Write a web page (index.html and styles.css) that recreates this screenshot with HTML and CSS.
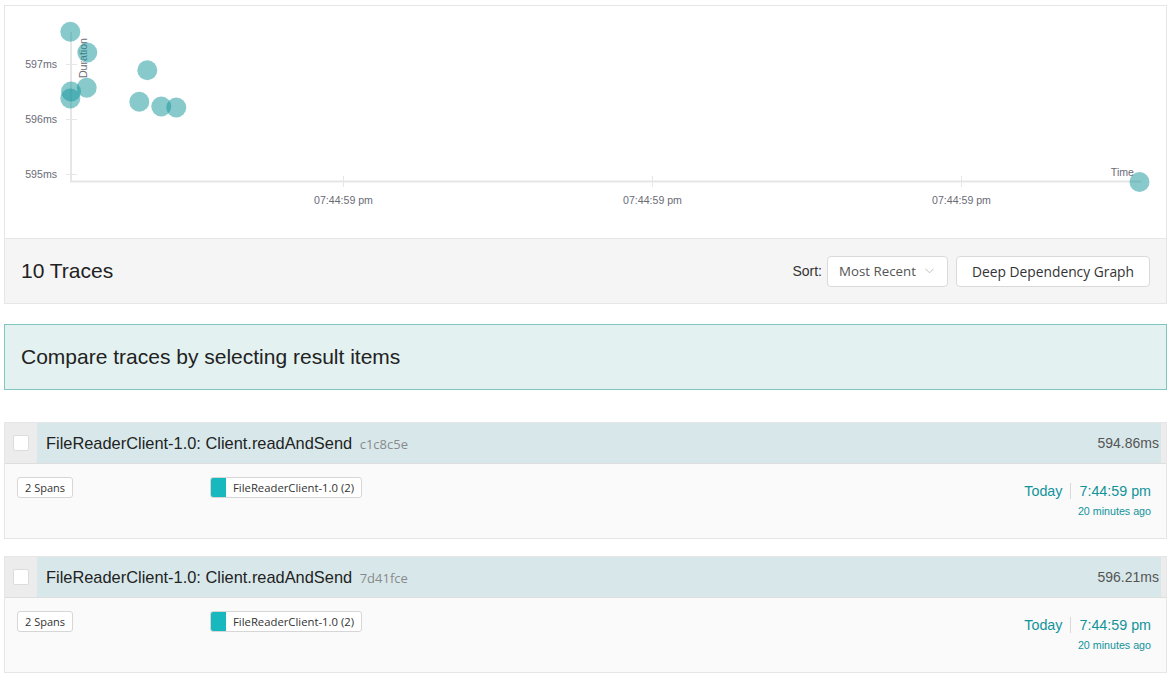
FILE: index.html
```html
<!DOCTYPE html>
<html>
<head>
<meta charset="utf-8">
<link rel="stylesheet" href="styles.css">
</head>
<body>
<div class="page">
  <div class="chart">
    <svg class="chart-svg" width="1161" height="232" viewBox="5 6 1161 232">
      <g class="axis">
        <line x1="71" y1="32" x2="71" y2="182" stroke="#e6e6e6" stroke-width="2"/>
        <line x1="70" y1="181.5" x2="1141" y2="181.5" stroke="#e6e6e6" stroke-width="2"/>
        <line x1="66" y1="64.5" x2="77" y2="64.5" stroke="#e6e6e6" stroke-width="1"/>
        <line x1="66" y1="119.5" x2="77" y2="119.5" stroke="#e6e6e6" stroke-width="1"/>
        <line x1="66" y1="174.5" x2="77" y2="174.5" stroke="#e6e6e6" stroke-width="1"/>
        <line x1="343.5" y1="176" x2="343.5" y2="187" stroke="#e6e6e6" stroke-width="1"/>
        <line x1="652.5" y1="176" x2="652.5" y2="187" stroke="#e6e6e6" stroke-width="1"/>
        <line x1="961.5" y1="176" x2="961.5" y2="187" stroke="#e6e6e6" stroke-width="1"/>
      </g>
      <g class="tick-labels">
        <text x="57" y="68" text-anchor="end">597ms</text>
        <text x="57" y="123" text-anchor="end">596ms</text>
        <text x="57" y="178" text-anchor="end">595ms</text>
        <text x="343.5" y="204" text-anchor="middle">07:44:59 pm</text>
        <text x="652.5" y="204" text-anchor="middle">07:44:59 pm</text>
        <text x="961.5" y="204" text-anchor="middle">07:44:59 pm</text>
        <text x="1134" y="176" text-anchor="end">Time</text>
        <text transform="translate(87,38) rotate(-90)" text-anchor="end">Duration</text>
      </g>
      <g class="dots">
        <circle cx="70.3" cy="31.7" r="10"/>
        <circle cx="87.3" cy="52.5" r="10"/>
        <circle cx="147.3" cy="70.3" r="10"/>
        <circle cx="71" cy="91.5" r="10"/>
        <circle cx="70.3" cy="98.5" r="10"/>
        <circle cx="86.7" cy="87.7" r="10"/>
        <circle cx="139.3" cy="101.7" r="10"/>
        <circle cx="161.3" cy="106.5" r="10"/>
        <circle cx="176.3" cy="107.5" r="10"/>
        <circle cx="1139.5" cy="182" r="10"/>
      </g>
    </svg>
  </div>

  <div class="results-header">
    <div class="results-count">10 Traces</div>
    <div class="results-actions">
      <span class="sort-label">Sort:</span>
      <div class="select">
        <span>Most Recent</span>
        <svg class="chevron" width="9" height="6" viewBox="0 0 9 6"><path d="M0.5 0.8 L4.5 4.8 L8.5 0.8" fill="none" stroke="#bfbfbf" stroke-width="1"/></svg>
      </div>
      <div class="btn">Deep Dependency Graph</div>
    </div>
  </div>

  <div class="alert">Compare traces by selecting result items</div>

  <div class="trace">
    <div class="trace-head">
      <div class="check-col"><span class="checkbox"></span></div>
      <div class="title-bar">
        <div class="title">FileReaderClient-1.0: Client.readAndSend <span class="trace-id">c1c8c5e</span></div>
        <div class="duration">594.86ms</div>
      </div>
    </div>
    <div class="trace-body">
      <div class="col-spans"><span class="tag">2 Spans</span></div>
      <div class="col-services"><span class="svc-tag"><span class="svc-color"></span><span class="svc-name">FileReaderClient-1.0 (2)</span></span></div>
      <div class="col-time">
        <div class="time-line"><span class="today">Today</span><span class="clock">7:44:59 pm</span></div>
        <div class="ago">20 minutes ago</div>
      </div>
    </div>
  </div>

  <div class="trace second">
    <div class="trace-head">
      <div class="check-col"><span class="checkbox"></span></div>
      <div class="title-bar">
        <div class="title">FileReaderClient-1.0: Client.readAndSend <span class="trace-id">7d41fce</span></div>
        <div class="duration">596.21ms</div>
      </div>
    </div>
    <div class="trace-body">
      <div class="col-spans"><span class="tag">2 Spans</span></div>
      <div class="col-services"><span class="svc-tag"><span class="svc-color"></span><span class="svc-name">FileReaderClient-1.0 (2)</span></span></div>
      <div class="col-time">
        <div class="time-line"><span class="today">Today</span><span class="clock">7:44:59 pm</span></div>
        <div class="ago">20 minutes ago</div>
      </div>
    </div>
  </div>
</div>
</body>
</html>
```

FILE: styles.css
```css
* { box-sizing: border-box; }

body {
  margin: 0;
  background: #ffffff;
  font-family: "Liberation Sans", Arial, sans-serif;
  color: #222;
}

.page {
  width: 1163px;
  margin: 5px 0 0 4px;
}

.chart {
  border: 1px solid #e6e6e6;
  height: 234px;
  background: #fff;
}

.chart-svg { display: block; }

.tick-labels text {
  font-family: "Liberation Sans", Arial, sans-serif;
  font-size: 10.6px;
  fill: #6b6b76;
}

.dots circle {
  fill: #12939a;
  fill-opacity: 0.5;
}

.results-header {
  display: flex;
  align-items: center;
  justify-content: space-between;
  height: 65px;
  padding: 0 16px;
  background: #f5f5f5;
  border: 1px solid #e6e6e6;
  border-top: none;
}

.results-count {
  font-size: 21px;
  color: #222;
}

.results-actions {
  display: flex;
  align-items: center;
}

.sort-label {
  font-size: 14px;
  color: #333;
  margin-right: 5px;
}

.select {
  display: flex;
  align-items: center;
  justify-content: space-between;
  width: 121px;
  height: 31px;
  padding: 0 13px 0 11px;
  background: #fff;
  border: 1px solid #d9d9d9;
  border-radius: 4px;
  font-family: "Open Sans", "Noto Sans", sans-serif;
  font-size: 13.3px;
  color: #555;
}

.chevron { display: block; }

.btn {
  display: flex;
  align-items: center;
  justify-content: center;
  margin-left: 8px;
  width: 194px;
  height: 31px;
  background: #fff;
  border: 1px solid #d9d9d9;
  border-radius: 4px;
  font-family: "Open Sans", "Noto Sans", sans-serif;
  font-size: 13.8px;
  color: #333;
}

.alert {
  display: flex;
  align-items: center;
  margin-top: 20px;
  height: 66px;
  padding-left: 16px;
  background: #e3f1f0;
  border: 1px solid #7fc6bf;
  font-size: 21px;
  color: #222;
}

.trace {
  margin-top: 32px;
  border: 1px solid #e6e6e6;
}

.trace.second { margin-top: 17px; }

.trace-head {
  display: flex;
  height: 41px;
  background: #ececec;
  padding-right: 5px;
  border-bottom: 1px solid #dedede;
}

.check-col {
  width: 32px;
  display: flex;
  align-items: center;
  padding-left: 8px;
}

.checkbox {
  display: block;
  width: 16px;
  height: 16px;
  background: #fff;
  border: 1px solid #dcdcdc;
  border-radius: 2px;
}

.title-bar {
  flex: 1;
  display: flex;
  align-items: center;
  justify-content: space-between;
  background: #d8e8ea;
  padding: 0 2px 0 9px;
}

.title {
  font-size: 16.4px;
  color: #222;
}

.trace-id {
  margin-left: 3px;
  font-family: "Open Sans", "Noto Sans", sans-serif;
  font-size: 13px;
  color: #8a8a8a;
}

.duration {
  font-size: 14px;
  color: #555;
}

.trace-body {
  display: flex;
  height: 74px;
  padding: 13px 15px 0 12px;
  background: #fafafa;
}

.col-spans { width: 193px; }

.col-services { flex: 1; }

.tag {
  display: inline-block;
  height: 21px;
  line-height: 19px;
  padding: 0 7px;
  background: #fff;
  border: 1px solid #d6d6d6;
  border-radius: 3px;
  font-family: "Open Sans", "Noto Sans", sans-serif;
  font-size: 11px;
  color: #333;
}

.svc-tag {
  display: inline-flex;
  height: 21px;
  background: #fff;
  border: 1px solid #d6d6d6;
  border-radius: 3px;
  overflow: hidden;
}

.svc-color {
  width: 15px;
  background: #17b8be;
}

.svc-name {
  padding: 0 7px 0 7px;
  line-height: 19px;
  font-family: "Open Sans", "Noto Sans", sans-serif;
  font-size: 11.3px;
  color: #333;
}

.col-time {
  display: flex;
  flex-direction: column;
  align-items: flex-end;
  padding-top: 6px;
}

.time-line {
  display: flex;
  align-items: center;
  font-size: 14.3px;
  color: #11939a;
  line-height: 16px;
}

.today {
  padding-right: 8px;
  border-right: 1px solid #d9d9d9;
}

.clock { padding-left: 8px; }

.ago {
  margin-top: 6px;
  font-size: 10.7px;
  color: #11939a;
}
```
